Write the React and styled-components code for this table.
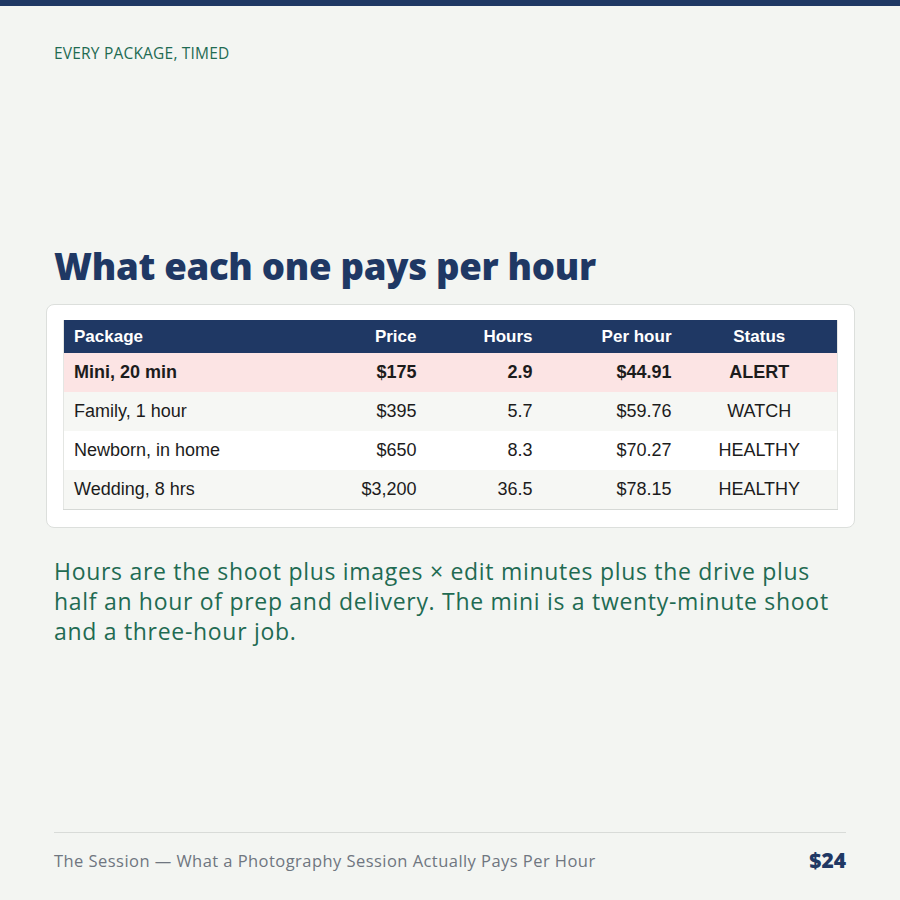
import React from "react";
import styled, { createGlobalStyle } from "styled-components";

const rows = [
  { name: "Mini, 20 min", price: "$175", hours: "2.9", rate: "$44.91", status: "ALERT", alert: true },
  { name: "Family, 1 hour", price: "$395", hours: "5.7", rate: "$59.76", status: "WATCH" },
  { name: "Newborn, in home", price: "$650", hours: "8.3", rate: "$70.27", status: "HEALTHY" },
  { name: "Wedding, 8 hrs", price: "$3,200", hours: "36.5", rate: "$78.15", status: "HEALTHY" },
];

const App = () => {
  return (
    <>
      <GlobalStyle />
      <Page>
        <TopBar />
        <Content>
          <Eyebrow>EVERY PACKAGE, TIMED</Eyebrow>
          <Heading>What each one pays per hour</Heading>
          <Card>
            <Table>
              <colgroup>
                <col style={{ width: 243 }} />
                <col style={{ width: 120 }} />
                <col style={{ width: 116 }} />
                <col style={{ width: 139 }} />
                <col style={{ width: 156 }} />
              </colgroup>
              <thead>
                <tr>
                  <Th>Package</Th>
                  <Th align="right">Price</Th>
                  <Th align="right">Hours</Th>
                  <Th align="right">Per hour</Th>
                  <Th align="center">Status</Th>
                </tr>
              </thead>
              <tbody>
                {rows.map((row, i) => (
                  <Row key={row.name} $alert={row.alert} $odd={i % 2 === 1}>
                    <Td>{row.name}</Td>
                    <Td align="right">{row.price}</Td>
                    <Td align="right">{row.hours}</Td>
                    <Td align="right">{row.rate}</Td>
                    <Td align="center">{row.status}</Td>
                  </Row>
                ))}
              </tbody>
            </Table>
          </Card>
          <Note>
            Hours are the shoot plus images × edit minutes plus the drive plus
            half an hour of prep and delivery. The mini is a twenty-minute shoot
            and a three-hour job.
          </Note>
          <Footer>
            <FooterText>
              The Session — What a Photography Session Actually Pays Per Hour
            </FooterText>
            <PageNum>$24</PageNum>
          </Footer>
        </Content>
      </Page>
    </>
  );
};

const GlobalStyle = createGlobalStyle`
  body {
    margin: 0;
    background: #f3f5f2;
  }
`;

const Page = styled.div`
  width: 900px;
  height: 900px;
  display: flex;
  flex-direction: column;
  background: #f3f5f2;
  font-family: "Open Sans", "DejaVu Sans", sans-serif;
`;

const TopBar = styled.div`
  height: 6px;
  background: #1f3864;
`;

const Content = styled.div`
  flex: 1;
  display: flex;
  flex-direction: column;
  padding: 0 54px;
`;

const Eyebrow = styled.div`
  margin-top: 37px;
  font-size: 15.5px;
  line-height: 20px;
  color: #1f6b52;
  letter-spacing: 0.2px;
`;

const Heading = styled.h1`
  margin: 181px 0 0;
  font-size: 36.6px;
  line-height: 44px;
  font-weight: 800;
  color: #1f3864;
  letter-spacing: -0.3px;
`;

const Card = styled.div`
  margin: 16px -9px 0 -8px;
  padding: 15px 17px 17px 16px;
  background: #ffffff;
  border: 1px solid #dcdfdc;
  border-radius: 8px;
`;

const Table = styled.table`
  width: 774px;
  border-collapse: collapse;
  table-layout: fixed;
  font-family: "Liberation Sans", Arial, sans-serif;
  font-size: 18px;
  border-bottom: 1px solid #d6d9d6;
  border-left: 1px solid #e4e6e3;
  border-right: 1px solid #e4e6e3;
`;

const Th = styled.th`
  height: 33px;
  padding: 0 10px;
  background: #1f3864;
  color: #ffffff;
  font-weight: 700;
  font-size: 17px;
  text-align: ${(p) => p.align || "left"};
`;

const Row = styled.tr`
  background: ${(p) => (p.$alert ? "#fce4e4" : p.$odd ? "#f6f7f4" : "#ffffff")};
  font-weight: ${(p) => (p.$alert ? 700 : 400)};
`;

const Td = styled.td`
  height: 39px;
  padding: 0 10px;
  color: #1c1c1c;
  text-align: ${(p) => p.align || "left"};
`;

const Note = styled.p`
  margin: 28px 0 0;
  font-size: 23px;
  line-height: 30px;
  color: #1f6b52;
  letter-spacing: 0.7px;
`;

const Footer = styled.div`
  margin-top: auto;
  margin-bottom: 26px;
  border-top: 1px solid #d8dbd8;
  padding-top: 13px;
  display: flex;
  justify-content: space-between;
  align-items: center;
`;

const FooterText = styled.div`
  font-size: 16.5px;
  color: #6f7680;
  letter-spacing: 0.45px;
`;

const PageNum = styled.div`
  font-size: 21px;
  font-weight: 800;
  color: #1f3864;
`;

export default App;
